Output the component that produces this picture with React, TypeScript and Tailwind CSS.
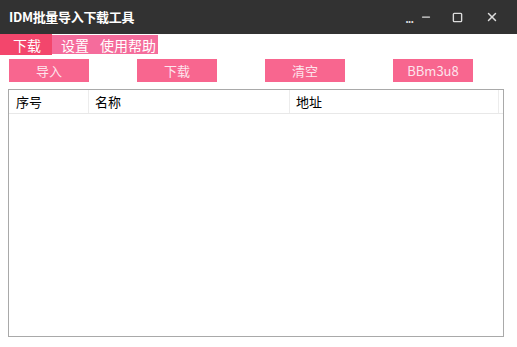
import { Minus, Square, X } from "lucide-react";

const font = { fontFamily: '"Microsoft YaHei", "Noto Sans CJK SC", "Liberation Sans", sans-serif' };

const buttons = ["导入", "下载", "清空", "BBm3u8"];

export default function App() {
  return (
    <div className="w-[517px] h-[347px] bg-white flex flex-col overflow-hidden" style={font}>
      {/* title bar */}
      <div className="h-[34px] bg-[#323232] flex items-center pl-[9px] pr-[18px]">
        <span className="text-white font-bold text-[13px] tracking-tight">IDM批量导入下载工具</span>
        <div className="ml-auto flex items-center text-[#dcdcdc]">
          <span className="text-[11px] font-bold leading-none mt-[3px] mr-[7px] tracking-[-1px]">...</span>
          <Minus className="w-[12px] h-[12px] mr-[20px]" strokeWidth={2.5} />
          <Square className="w-[11px] h-[11px] mr-[22px]" strokeWidth={3} />
          <X className="w-[14px] h-[14px]" strokeWidth={2.5} />
        </div>
      </div>

      {/* menu */}
      <div className="flex items-center h-[21px]">
        <div className="h-[21px] w-[52px] bg-[#f3466c] text-white text-[14px] flex items-center justify-center leading-none pl-[2px]">下载</div>
        <div className="h-[19px] bg-[#f56c9c] text-white text-[14px] flex items-center gap-[11px] pl-[9px] pr-[2px] leading-none">
          <span>设置</span>
          <span>使用帮助</span>
        </div>
      </div>

      {/* buttons */}
      <div className="flex gap-[48px] pl-[9px] mt-[4px]">
        {buttons.map((b) => (
          <div key={b} className="w-[80px] h-[23px] bg-[#f8668f] text-[#fde4ec] text-[13px] flex items-center justify-center">
            {b}
          </div>
        ))}
      </div>

      {/* list */}
      <div className="mx-[8px] mt-[7px] w-[496px] h-[248px] border border-[#a9a9a9] flex flex-col">
        <div className="flex h-[24px] border-b border-[#e8e8e8] text-[13px] text-black">
          <div className="w-[80px] border-r border-[#ececec] flex items-center pl-[7px]">序号</div>
          <div className="w-[201px] border-r border-[#ececec] flex items-center pl-[6px]">名称</div>
          <div className="w-[209px] border-r border-[#ececec] flex items-center pl-[6px]">地址</div>
          <div className="flex-1" />
        </div>
      </div>
    </div>
  );
}
